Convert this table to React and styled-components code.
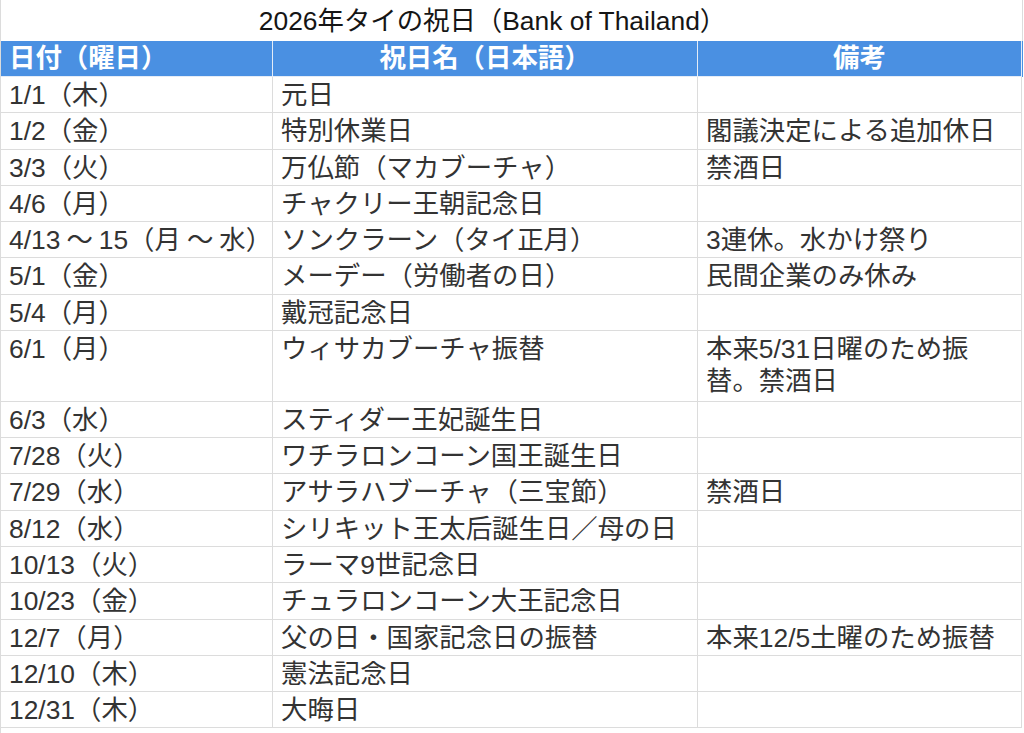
import React from "react";
import styled, { createGlobalStyle, css } from "styled-components";

const GlobalStyle = createGlobalStyle`
  html, body {
    margin: 0;
    padding: 0;
    background: #ffffff;
  }
  body {
    font-family: "Liberation Sans", "Noto Sans CJK JP", sans-serif;
    text-spacing-trim: space-all;
  }
`;

const Sheet = styled.div`
  width: 1022px;
  border-left: 1px solid #dcdcdc;
  overflow: hidden;
  height: 733px;
`;

const Title = styled.div`
  height: 41px;
  box-sizing: border-box;
  border-right: 1px solid #dcdcdc;
  display: flex;
  align-items: center;
  justify-content: center;
  padding-right: 38px;
  font-size: 26.4px;
  color: #151515;
  line-height: 32px;
`;

const Row = styled.div`
  display: grid;
  grid-template-columns: 272px 425px 324px;
  height: ${(p) => (p.tall ? "70.7px" : "36.3px")};

  ${(p) =>
    p.head &&
    css`
      height: 36px;
      background: #4a90e2;
    `};
`;

const Cell = styled.div`
  box-sizing: border-box;
  border-right: 1px solid #dcdcdc;
  border-bottom: 1px solid #dcdcdc;
  padding: 2px 8px 0;
  font-size: 26.4px;
  line-height: 32px;
  color: #333333;
  white-space: nowrap;
  overflow: hidden;
`;

const HeadCell = styled(Cell)`
  color: #ffffff;
  font-weight: bold;
  padding-top: 1px;
  border-color: #e4ecf7;
  text-align: ${(p) => (p.center ? "center" : "left")};
`;

const Wave = styled.span`
  margin: 0 6px;
`;

// "〜" gets a little room on both sides, as in the sheet
const withWaves = (text) =>
  text.includes("〜")
    ? text.split("〜").flatMap((part, i) =>
        i === 0 ? [part] : [<Wave key={i}>〜</Wave>, part]
      )
    : text;

const rows = [
  ["1/1（木）", "元日", ""],
  ["1/2（金）", "特別休業日", "閣議決定による追加休日"],
  ["3/3（火）", "万仏節（マカブーチャ）", "禁酒日"],
  ["4/6（月）", "チャクリー王朝記念日", ""],
  ["4/13〜15（月〜水）", "ソンクラーン（タイ正月）", "3連休。水かけ祭り"],
  ["5/1（金）", "メーデー（労働者の日）", "民間企業のみ休み"],
  ["5/4（月）", "戴冠記念日", ""],
  ["6/1（月）", "ウィサカブーチャ振替", ["本来5/31日曜のため振", "替。禁酒日"]],
  ["6/3（水）", "スティダー王妃誕生日", ""],
  ["7/28（火）", "ワチラロンコーン国王誕生日", ""],
  ["7/29（水）", "アサラハブーチャ（三宝節）", "禁酒日"],
  ["8/12（水）", "シリキット王太后誕生日／母の日", ""],
  ["10/13（火）", "ラーマ9世記念日", ""],
  ["10/23（金）", "チュラロンコーン大王記念日", ""],
  ["12/7（月）", "父の日・国家記念日の振替", "本来12/5土曜のため振替"],
  ["12/10（木）", "憲法記念日", ""],
  ["12/31（木）", "大晦日", ""],
];

export default function App() {
  return (
    <>
      <GlobalStyle />
      <Sheet>
        <Title>2026年タイの祝日（Bank of Thailand）</Title>
        <Row head>
          <HeadCell>日付（曜日）</HeadCell>
          <HeadCell center>祝日名（日本語）</HeadCell>
          <HeadCell center>備考</HeadCell>
        </Row>
        {rows.map(([date, name, note]) => {
          const tall = Array.isArray(note);
          return (
            <Row key={date} tall={tall}>
              <Cell>{withWaves(date)}</Cell>
              <Cell>{name}</Cell>
              <Cell>
                {tall
                  ? note.map((line) => <div key={line}>{line}</div>)
                  : note}
              </Cell>
            </Row>
          );
        })}
      </Sheet>
    </>
  );
}
